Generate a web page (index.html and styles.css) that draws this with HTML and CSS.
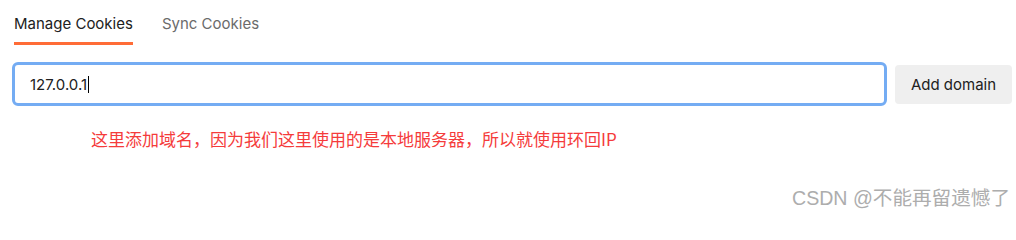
FILE: index.html
```html
<!DOCTYPE html>
<html lang="zh-CN">
<head>
<meta charset="utf-8">
<title>Manage Cookies</title>
<link rel="stylesheet" href="styles.css">
</head>
<body>
<div class="page">
  <nav class="tabs">
    <div class="tab tab-active">Manage Cookies</div>
    <div class="tab">Sync Cookies</div>
  </nav>
  <div class="domain-row">
    <div class="domain-input"><span class="value">127.0.0.1</span><span class="caret"></span></div>
    <button class="add-btn" type="button">Add domain</button>
  </div>
  <p class="note">这里添加域名，因为我们这里使用的是本地服务器，所以就使用环回IP</p>
  <div class="watermark">CSDN @不能再留遗憾了</div>
</div>
</body>
</html>
```

FILE: styles.css
```css
html, body {
  margin: 0;
  padding: 0;
  background: #ffffff;
}

.page {
  width: 1016px;
  height: 217px;
  overflow: hidden;
  font-family: Inter, "Noto Sans", sans-serif;
  display: flex;
  flex-direction: column;
}

.tabs {
  display: flex;
  gap: 29px;
  padding: 0 14px;
  height: 45px;
}

.tab {
  box-sizing: border-box;
  height: 45px;
  padding-top: 14px;
  font-size: 15px;
  line-height: 20px;
  color: #6b6b6b;
  border-bottom: 3px solid transparent;
  white-space: nowrap;
}

.tab-active {
  color: #212121;
  border-bottom-color: #ff6c37;
}

.domain-row {
  display: flex;
  align-items: center;
  gap: 8px;
  margin-top: 17px;
  padding-left: 12px;
}

.domain-input {
  box-sizing: border-box;
  width: 875px;
  height: 44px;
  border: 3px solid #74acf3;
  border-radius: 6px;
  display: flex;
  align-items: center;
  padding-left: 15px;
  font-size: 15px;
  color: #212121;
}

.caret {
  display: inline-block;
  width: 1px;
  height: 17px;
  background: #000000;
  margin-left: 1px;
}

.add-btn {
  box-sizing: border-box;
  width: 117px;
  height: 39px;
  border: none;
  border-radius: 4px;
  background: #efefef;
  color: #212121;
  font-family: Inter, "Noto Sans", sans-serif;
  font-size: 15px;
  padding: 0;
}

.note {
  margin: 24px 0 0 91px;
  font-family: "Noto Sans CJK SC", "Noto Sans", sans-serif;
  font-size: 17px;
  line-height: 18px;
  color: #f53b3b;
  white-space: nowrap;
}

.watermark {
  margin-top: auto;
  margin-bottom: 9px;
  padding-right: 6px;
  text-align: right;
  font-family: "Liberation Sans", "Noto Sans CJK SC", sans-serif;
  font-size: 19.6px;
  line-height: 19px;
  color: #adadad;
  white-space: nowrap;
}
```
